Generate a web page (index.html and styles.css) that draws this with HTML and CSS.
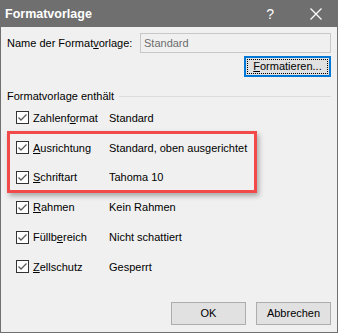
FILE: index.html
```html
<!DOCTYPE html>
<html lang="de">
<head>
    <meta charset="UTF-8">
    <title>Formatvorlage</title>
    <link rel="stylesheet" href="styles.css">
</head>
<body>
    <div class="window">
        <div class="titlebar">
            <span class="title">Formatvorlage</span>
            <span class="help">?</span>
            <svg class="close" width="12" height="12" viewBox="0 0 12 12">
                <path d="M0.5 0.5 L11.5 11.5 M11.5 0.5 L0.5 11.5" stroke="#fff" stroke-width="1.2" fill="none"/>
            </svg>
        </div>

        <div class="content">
            <div class="name-row">
                <span class="label">Name der Format<u>v</u>orlage:</span>
                <div class="input">Standard</div>
            </div>
            <div class="format-row">
                <button class="btn btn-focus"><span class="focus"><u>F</u>ormatieren...</span></button>
            </div>

            <div class="group">
                <span class="group-title">Formatvorlage enthält</span>
                <span class="group-line"></span>
            </div>

            <div class="options">
                <div class="option">
                    <span class="check"><svg width="11" height="11" viewBox="0 0 11 11"><path d="M1.5 5.5 L4 8 L9.5 2.5" stroke="#5a5a5a" stroke-width="1.3" fill="none"/></svg></span>
                    <span class="opt-name">Zahlenf<u>o</u>rmat</span>
                    <span class="opt-value">Standard</span>
                </div>
                <div class="option">
                    <span class="check"><svg width="11" height="11" viewBox="0 0 11 11"><path d="M1.5 5.5 L4 8 L9.5 2.5" stroke="#5a5a5a" stroke-width="1.3" fill="none"/></svg></span>
                    <span class="opt-name"><u>A</u>usrichtung</span>
                    <span class="opt-value">Standard, oben ausgerichtet</span>
                </div>
                <div class="option">
                    <span class="check"><svg width="11" height="11" viewBox="0 0 11 11"><path d="M1.5 5.5 L4 8 L9.5 2.5" stroke="#5a5a5a" stroke-width="1.3" fill="none"/></svg></span>
                    <span class="opt-name"><u>S</u>chriftart</span>
                    <span class="opt-value">Tahoma 10</span>
                </div>
                <div class="option">
                    <span class="check"><svg width="11" height="11" viewBox="0 0 11 11"><path d="M1.5 5.5 L4 8 L9.5 2.5" stroke="#5a5a5a" stroke-width="1.3" fill="none"/></svg></span>
                    <span class="opt-name"><u>R</u>ahmen</span>
                    <span class="opt-value">Kein Rahmen</span>
                </div>
                <div class="option">
                    <span class="check"><svg width="11" height="11" viewBox="0 0 11 11"><path d="M1.5 5.5 L4 8 L9.5 2.5" stroke="#5a5a5a" stroke-width="1.3" fill="none"/></svg></span>
                    <span class="opt-name">Füllb<u>e</u>reich</span>
                    <span class="opt-value">Nicht schattiert</span>
                </div>
                <div class="option">
                    <span class="check"><svg width="11" height="11" viewBox="0 0 11 11"><path d="M1.5 5.5 L4 8 L9.5 2.5" stroke="#5a5a5a" stroke-width="1.3" fill="none"/></svg></span>
                    <span class="opt-name"><u>Z</u>ellschutz</span>
                    <span class="opt-value">Gesperrt</span>
                </div>
                <div class="highlight"></div>
            </div>

            <div class="actions">
                <button class="btn">OK</button>
                <button class="btn">Abbrechen</button>
            </div>
        </div>
    </div>
</body>
</html>
```

FILE: styles.css
```css
* {
    margin: 0;
    padding: 0;
    box-sizing: border-box;
}

body {
    font-family: "Liberation Sans", Arial, sans-serif;
    font-size: 11px;
    color: #000;
    background: #fff;
}

u {
    text-underline-offset: 1px;
}

.window {
    width: 338px;
    height: 333px;
    background: #f0f0f0;
    border: 1px solid #707070;
    border-top: none;
}

.titlebar {
    height: 27px;
    background: #6f6f6f;
    color: #fff;
    display: flex;
    align-items: center;
    padding-left: 5px;
    margin: 0 -1px;
}

.title {
    font-weight: bold;
    font-size: 12.5px;
    flex: 1;
}

.help {
    font-size: 14px;
    margin-right: 36px;
}

.close {
    margin-right: 16px;
}

.content {
    padding: 6px 6px 0 6px;
}

.name-row {
    display: flex;
    align-items: center;
    justify-content: space-between;
    white-space: nowrap;
}

.input {
    width: 191px;
    height: 20px;
    border: 1px solid #c8c8c8;
    background: #f0f0f0;
    color: #6d6d6d;
    padding: 3px 3px;
    line-height: 12px;
}

.format-row {
    display: flex;
    justify-content: flex-end;
    margin-top: 3px;
}

.btn {
    font-family: "Liberation Sans", Arial, sans-serif;
    font-size: 11px;
    color: #000;
    width: 75px;
    height: 23px;
    background: #e1e1e1;
    border: 1px solid #adadad;
}

.btn-focus {
    width: 87px;
    height: 21px;
    border: 2px solid #0078d7;
    padding: 1px;
}

.focus {
    display: block;
    height: 100%;
    border: 1px dotted #000;
    line-height: 13px;
}

.group {
    display: flex;
    align-items: center;
    margin-top: 12px;
    height: 14px;
}

.group-title {
    margin-right: 5px;
}

.group-line {
    flex: 1;
    border-top: 1px solid #dcdcdc;
}

.options {
    position: relative;
    padding-left: 9px;
}

.option {
    display: flex;
    align-items: center;
    height: 29.8px;
    white-space: nowrap;
}

.check {
    flex-shrink: 0;
    width: 13px;
    height: 13px;
    border: 1px solid #333;
    background: #fff;
    display: flex;
    align-items: center;
    justify-content: center;
    margin-right: 4px;
}

.opt-name {
    flex-shrink: 0;
    width: 76px;
}

.highlight {
    position: absolute;
    left: 0;
    top: 28px;
    width: 250px;
    height: 62px;
    border: 3px solid #f24949;
    box-shadow: 2px 3px 5px rgba(0, 0, 0, 0.3);
}

.actions {
    display: flex;
    justify-content: flex-end;
    gap: 10px;
    margin-top: 20px;
}
```
